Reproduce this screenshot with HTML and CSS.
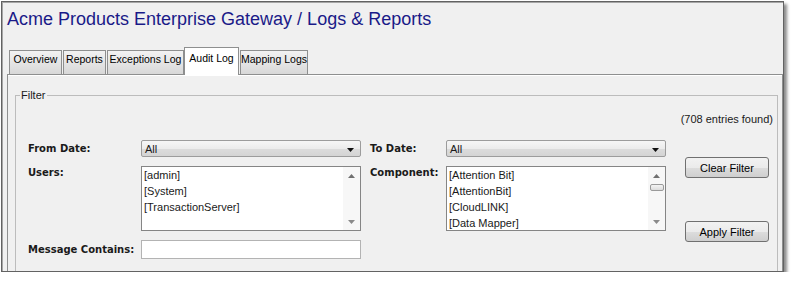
FILE: index.html
```html
<!DOCTYPE html>
<html lang="en">
<head>
    <meta charset="UTF-8">
    <title>Logs &amp; Reports</title>
    <link rel="stylesheet" href="styles.css">
</head>
<body>
    <div class="frame">
        <h1 class="title">Acme Products Enterprise Gateway / Logs &amp; Reports</h1>
        <div class="tabs">
            <div class="tab tab-overview">Overview</div>
            <div class="tab tab-reports">Reports</div>
            <div class="tab tab-exceptions">Exceptions Log</div>
            <div class="tab tab-audit active">Audit Log</div>
            <div class="tab tab-mapping">Mapping Logs</div>
        </div>
        <div class="panel">
            <fieldset class="filter">
                <legend>Filter</legend>
                <div class="filter-body">
                    <div class="count">(708 entries found)</div>
                    <div class="form clearfix">
                        <div class="fields">
                            <label class="lbl">From Date:</label>
                            <div class="combo">
                                <span>All</span>
                                <svg width="7" height="4" viewBox="0 0 7 4"><path d="M0 0h7L3.5 4z" fill="#111"/></svg>
                            </div>
                            <label class="lbl lbl2">To Date:</label>
                            <div class="combo">
                                <span>All</span>
                                <svg width="7" height="4" viewBox="0 0 7 4"><path d="M0 0h7L3.5 4z" fill="#111"/></svg>
                            </div>

                            <label class="lbl top">Users:</label>
                            <div class="list">
                                <ul>
                                    <li>[admin]</li>
                                    <li>[System]</li>
                                    <li>[TransactionServer]</li>
                                </ul>
                                <div class="scroll">
                                    <div class="arrow"><svg width="7" height="4" viewBox="0 0 7 4"><path d="M3.5 0L7 4H0z" fill="#707070"/></svg></div>
                                    <div class="track"></div>
                                    <div class="arrow"><svg width="7" height="4" viewBox="0 0 7 4"><path d="M0 0h7L3.5 4z" fill="#8a8a8a"/></svg></div>
                                </div>
                            </div>
                            <label class="lbl lbl2 top">Component:</label>
                            <div class="list">
                                <ul>
                                    <li>[Attention Bit]</li>
                                    <li>[AttentionBit]</li>
                                    <li>[CloudLINK]</li>
                                    <li>[Data Mapper]</li>
                                </ul>
                                <div class="scroll">
                                    <div class="arrow"><svg width="7" height="4" viewBox="0 0 7 4"><path d="M3.5 0L7 4H0z" fill="#707070"/></svg></div>
                                    <div class="track"><div class="thumb"></div></div>
                                    <div class="arrow"><svg width="7" height="4" viewBox="0 0 7 4"><path d="M0 0h7L3.5 4z" fill="#8a8a8a"/></svg></div>
                                </div>
                            </div>

                            <label class="lbl">Message Contains:</label>
                            <input class="text" type="text">
                        </div>
                        <div class="buttons">
                            <button class="btn">Clear Filter</button>
                            <button class="btn btn-apply">Apply Filter</button>
                        </div>
                    </div>
                </div>
            </fieldset>
        </div>
    </div>
</body>
</html>
```

FILE: styles.css
```css
* {
    margin: 0;
    padding: 0;
}
body {
    background: #fff;
    font-family: "Liberation Sans", Arial, sans-serif;
    font-size: 11px;
    color: #1a1a1a;
}
.frame {
    width: 783px;
    height: 271px;
    margin: 1px 0 0 1px;
    box-sizing: border-box;
    border: 1px solid #626262;
    background: #f0f0f0;
    box-shadow: inset 1px 1px 0 #a6a6a6, 3px 3px 3px rgba(0, 0, 0, 0.45);
    overflow: hidden;
}
.title {
    padding: 7px 0 0 5px;
    font-size: 18px;
    line-height: 21px;
    font-weight: normal;
    color: #1a1a88;
}
.tabs {
    display: flex;
    align-items: flex-end;
    margin: 17px 0 -1px 7px;
    position: relative;
    z-index: 1;
}
.tab {
    box-sizing: border-box;
    height: 25px;
    margin-right: 1px;
    padding-top: 2px;
    font-size: 10.5px;
    line-height: 13px;
    text-align: center;
    white-space: nowrap;
    border: 1px solid #8e8f8f;
    background: linear-gradient(#f2f2f2, #d8d8d8);
    color: #000;
}
.tab-overview { width: 53px; }
.tab-reports { width: 43px; }
.tab-exceptions { width: 77px; }
.tab-audit { width: 55px; }
.tab-mapping { width: 68px; }
.tab.active {
    height: 28px;
    padding-top: 4px;
    border-bottom: none;
    background: #fff;
    margin-left: -1px;
}
.panel {
    width: 776px;
    height: 210px;
    margin-left: 5px;
    box-sizing: border-box;
    border: 1px solid #8e8f8f;
    padding-top: 14px;
    background: #f0f0f0;
    box-shadow: inset 0 1px 0 #fff;
}
.filter {
    margin: 0 4px 0 7px;
    padding: 10px 4px 20px;
    border: 1px solid #bcbcbc;
}
.filter legend {
    margin-left: 0;
    padding: 0 2px 0 1px;
    line-height: 13px;
    color: #1a1a1a;
}
.filter-body {
    padding-left: 8px;
}
.count {
    line-height: 14px;
    text-align: right;
}
.clearfix:after {
    clear: both;
    content: '\20';
    display: block;
}
.form {
    display: flex;
    margin-top: 14px;
}
.fields {
    display: grid;
    grid-template-columns: 113px 220px 85px 220px;
    grid-template-rows: 17px 65px 19px;
    row-gap: 9px;
}
.lbl {
    align-self: center;
    font-family: "DejaVu Sans", Verdana, sans-serif;
    font-size: 10px;
    font-weight: bold;
    line-height: 14px;
    white-space: nowrap;
}
.lbl2 {
    padding-left: 9px;
}
.lbl.top {
    align-self: start;
}
.combo {
    display: flex;
    align-items: center;
    justify-content: space-between;
    box-sizing: border-box;
    padding: 0 6px 0 3px;
    border: 1px solid #9c9c9c;
    border-radius: 2px;
    background: linear-gradient(#f6f6f6 0%, #ececec 50%, #dcdcdc 51%, #d4d4d4 100%);
    line-height: 14px;
}
.combo svg {
    margin-top: 3px;
}
.list {
    display: flex;
    box-sizing: border-box;
    border: 1px solid #858585;
    background: #fff;
    overflow: hidden;
}
.list ul {
    flex: 1;
    list-style: none;
    padding-left: 2px;
}
.list li {
    line-height: 16px;
    white-space: nowrap;
}
.scroll {
    display: flex;
    flex-direction: column;
    width: 17px;
    background: #f7f7f7;
}
.scroll .arrow {
    display: flex;
    align-items: center;
    justify-content: center;
    height: 17px;
}
.scroll .track {
    flex: 1;
}
.thumb {
    height: 5px;
    margin: 0 1px 0 2px;
    border: 1px solid #9a9a9a;
    border-radius: 2px;
    background: linear-gradient(#f4f4f4, #dcdcdc);
}
.text {
    box-sizing: border-box;
    border: 1px solid #b3b3b3;
    background: #fff;
    outline: none;
}
.buttons {
    display: flex;
    flex-direction: column;
    width: 84px;
    margin-left: 19px;
    padding-top: 17px;
}
.btn {
    height: 21px;
    border: 1px solid #707070;
    border-radius: 3px;
    background: linear-gradient(#f2f2f2 0%, #ebebeb 50%, #dddddd 51%, #cfcfcf 100%);
    font-family: "Liberation Sans", Arial, sans-serif;
    font-size: 11px;
    color: #000;
}
.btn-apply {
    margin-top: 43px;
}
```
